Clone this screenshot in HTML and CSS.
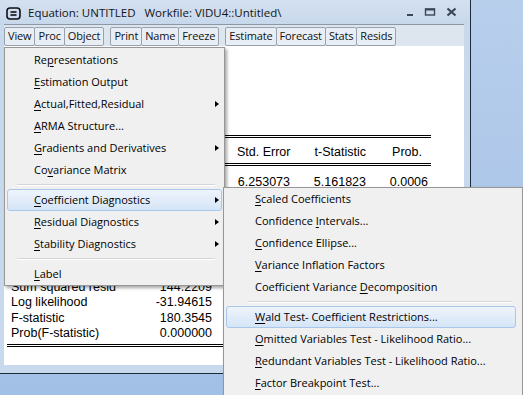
FILE: index.html
```html
<!DOCTYPE html>
<html>
<head>
<meta charset="utf-8">
<link rel="stylesheet" href="styles.css">
</head>
<body>
<div class="desktop">
  <div class="window">
    <div class="titlebar">
      <svg class="sysicon" width="15" height="13" viewBox="0 0 15 13"><rect x="1" y="1" width="13" height="11" rx="3" fill="none" stroke="#111" stroke-width="1.6"/><line x1="4.5" y1="5" x2="10.5" y2="5" stroke="#111" stroke-width="1.6"/><line x1="4.5" y1="8" x2="10.5" y2="8" stroke="#111" stroke-width="1.6"/></svg>
      <span class="title">Equation: UNTITLED&nbsp;&nbsp;&nbsp;Workfile: VIDU4::Untitled\</span>
      <div class="controls">
        <svg width="8" height="10" viewBox="0 0 8 10"><rect x="1" y="7" width="6" height="2" fill="#3b4656"/></svg>
        <svg width="12" height="10" viewBox="0 0 12 10"><rect x="1.5" y="2" width="9" height="6" fill="none" stroke="#3b4656" stroke-width="1.4"/><rect x="1" y="1.5" width="10" height="2" fill="#3b4656"/></svg>
        <svg width="11" height="10" viewBox="0 0 11 10"><path d="M1.5 1.5 L9.5 8.5 M9.5 1.5 L1.5 8.5" stroke="#3b4656" stroke-width="2.2"/></svg>
      </div>
    </div>
    <div class="toolbar">
      <div class="group"><span class="btn">View</span><span class="btn">Proc</span><span class="btn">Object</span></div>
      <div class="group"><span class="btn">Print</span><span class="btn">Name</span><span class="btn">Freeze</span></div>
      <div class="group"><span class="btn">Estimate</span><span class="btn">Forecast</span><span class="btn">Stats</span><span class="btn">Resids</span></div>
    </div>
    <div class="content">
      <div class="results">
        <div class="dbl"></div>
        <div class="row head"><span class="col se">Std. Error</span><span class="col ts">t-Statistic</span><span class="col pr prh">Prob.</span></div>
        <div class="dbl"></div>
        <div class="row data"><span class="col se">6.253073</span><span class="col ts">5.161823</span><span class="col pr">0.0006</span></div>
        <div class="stats">
          <div class="srow"><span>Sum squared resid</span><span>144.2209</span></div>
          <div class="srow"><span>Log likelihood</span><span>-31.94615</span></div>
          <div class="srow"><span>F-statistic</span><span>180.3545</span></div>
          <div class="srow"><span>Prob(F-statistic)</span><span>0.000000</span></div>
        </div>
        <div class="dbl"></div>
      </div>
    </div>
  </div>
  <div class="side"></div>

  <div class="menu main">
    <div class="item">Re<u>p</u>resentations</div>
    <div class="item"><u>E</u>stimation Output</div>
    <div class="item sub-arrow"><u>A</u>ctual,Fitted,Residual</div>
    <div class="item"><u>A</u>RMA Structure...</div>
    <div class="item sub-arrow"><u>G</u>radients and Derivatives</div>
    <div class="item">Co<u>v</u>ariance Matrix</div>
    <div class="sep"></div>
    <div class="item sub-arrow active"><u>C</u>oefficient Diagnostics</div>
    <div class="item sub-arrow"><u>R</u>esidual Diagnostics</div>
    <div class="item sub-arrow"><u>S</u>tability Diagnostics</div>
    <div class="sep"></div>
    <div class="item"><u>L</u>abel</div>
  </div>

  <div class="menu sub">
    <div class="item"><u>S</u>caled Coefficients</div>
    <div class="item">Confidence <u>I</u>ntervals...</div>
    <div class="item"><u>C</u>onfidence Ellipse...</div>
    <div class="item"><u>V</u>ariance Inflation Factors</div>
    <div class="item">Coefficient Variance <u>D</u>ecomposition</div>
    <div class="sep"></div>
    <div class="item active"><u>W</u>ald Test- Coefficient Restrictions...</div>
    <div class="item"><u>O</u>mitted Variables Test - Likelihood Ratio...</div>
    <div class="item"><u>R</u>edundant Variables Test - Likelihood Ratio...</div>
    <div class="item"><u>F</u>actor Breakpoint Test...</div>
  </div>
</div>
</body>
</html>
```

FILE: styles.css
```css
html, body {
  margin: 0;
  padding: 0;
}
body {
  width: 523px;
  height: 395px;
  overflow: hidden;
  background: #a3c0e6;
  font-family: "Open Sans", "Noto Sans", sans-serif;
  font-size: 11px;
  color: #000;
}
.desktop {
  position: relative;
  width: 523px;
  height: 395px;
  display: flex;
  align-items: flex-start;
  background: linear-gradient(#b8cfec, #a2bfe6);
}
.window {
  width: 470px;
  height: 373px;
  flex: none;
  background: #c9d9ed;
  border-right: 1px solid #1d2b38;
  border-bottom: 1px solid #1d2b38;
  display: flex;
  flex-direction: column;
}
.titlebar {
  height: 24px;
  flex: none;
  display: flex;
  align-items: center;
  padding-left: 6px;
  padding-right: 13px;
  background: linear-gradient(#d3e0f0, #c8d8ec);
}
.sysicon {
  display: block;
  margin-top: 2px;
}
.title {
  margin-left: 7px;
  font-size: 11.5px;
  color: #141414;
  flex: 1;
  white-space: nowrap;
}
.controls {
  display: flex;
  align-items: center;
  gap: 10px;
}
.controls svg {
  display: block;
}
.toolbar {
  flex: none;
  height: 22px;
  box-sizing: border-box;
  margin: 0 6px 0 4px;
  border-top: 1px solid #8d98a6;
  background: #dde5ef;
  display: flex;
  align-items: flex-start;
  padding-top: 2px;
  gap: 6px;
}
.group {
  display: flex;
}
.btn {
  height: 17px;
  line-height: 16px;
  padding: 0 3px;
  letter-spacing: -0.15px;
  border: 1px solid #98a2ae;
  border-radius: 2px;
  background: #e9eef4;
  margin-left: -1px;
  color: #111;
  white-space: nowrap;
}
.group .btn:first-child {
  margin-left: 0;
}
.content {
  flex: none;
  margin: 0 6px 0 4px;
  background: #fff;
  height: 319px;
  padding-left: 3px;
}
.results {
  width: 424px;
  padding-top: 89px;
  font-family: "Liberation Sans", Arial, sans-serif;
  font-size: 12.5px;
  color: #000;
}
.dbl {
  height: 1px;
  border-top: 1px solid #000;
  border-bottom: 1px solid #000;
}
.row {
  display: flex;
}
.row.head {
  height: 22px;
  padding-top: 3px;
  align-items: center;
}
.row.data {
  height: 16px;
  padding-top: 8px;
  align-items: center;
}
.col {
  text-align: right;
  white-space: nowrap;
}
.col.se {
  margin-left: 230px;
  width: 53px;
}
.col.ts {
  width: 76px;
}
.col.pr {
  width: 62px;
}
.col.prh {
  padding-right: 6px;
  width: 56px;
}
.stats {
  margin-top: 90px;
  width: 201px;
  padding-left: 4px;
  margin-bottom: 3px;
}
.srow {
  display: flex;
  justify-content: space-between;
  line-height: 15px;
  height: 15.3px;
}
.side {
  flex: 1;
}
.menu {
  position: absolute;
  background: #f0f0f0;
  border: 1px solid #979797;
  box-shadow: 2px 2px 3px rgba(0, 0, 0, 0.35);
  box-sizing: border-box;
  color: #000;
}
.menu.main {
  left: 4px;
  top: 47px;
  width: 221px;
  padding: 1px 2px 0 2px;
}
.menu.sub {
  left: 223px;
  top: 187px;
  width: 300px;
  height: 215px;
  padding: 0 6px 0 2px;
}
.item {
  height: 22px;
  box-sizing: border-box;
  padding-left: 26px;
  white-space: nowrap;
  position: relative;
  border: 1px solid transparent;
  border-radius: 3px;
  line-height: 20px;
}
.menu.sub .item {
  padding-left: 28px;
}
.item u {
  text-decoration: underline;
  text-underline-offset: 2px;
}
.item.active {
  background: linear-gradient(#eef4fb, #d5e5f7);
  border-color: #a9c7ea;
}
.sub-arrow::after {
  content: "";
  position: absolute;
  right: 2px;
  top: 7px;
  border-left: 4px solid #000;
  border-top: 3.5px solid transparent;
  border-bottom: 3.5px solid transparent;
}
.sep {
  height: 8px;
  position: relative;
}
.sep::after {
  content: "";
  position: absolute;
  left: 10px;
  right: 7px;
  top: 3px;
  border-top: 1px solid #d5d5d5;
  border-bottom: 1px solid #fff;
}
.menu.sub .sep::after {
  left: 22px;
  right: 4px;
}
```
